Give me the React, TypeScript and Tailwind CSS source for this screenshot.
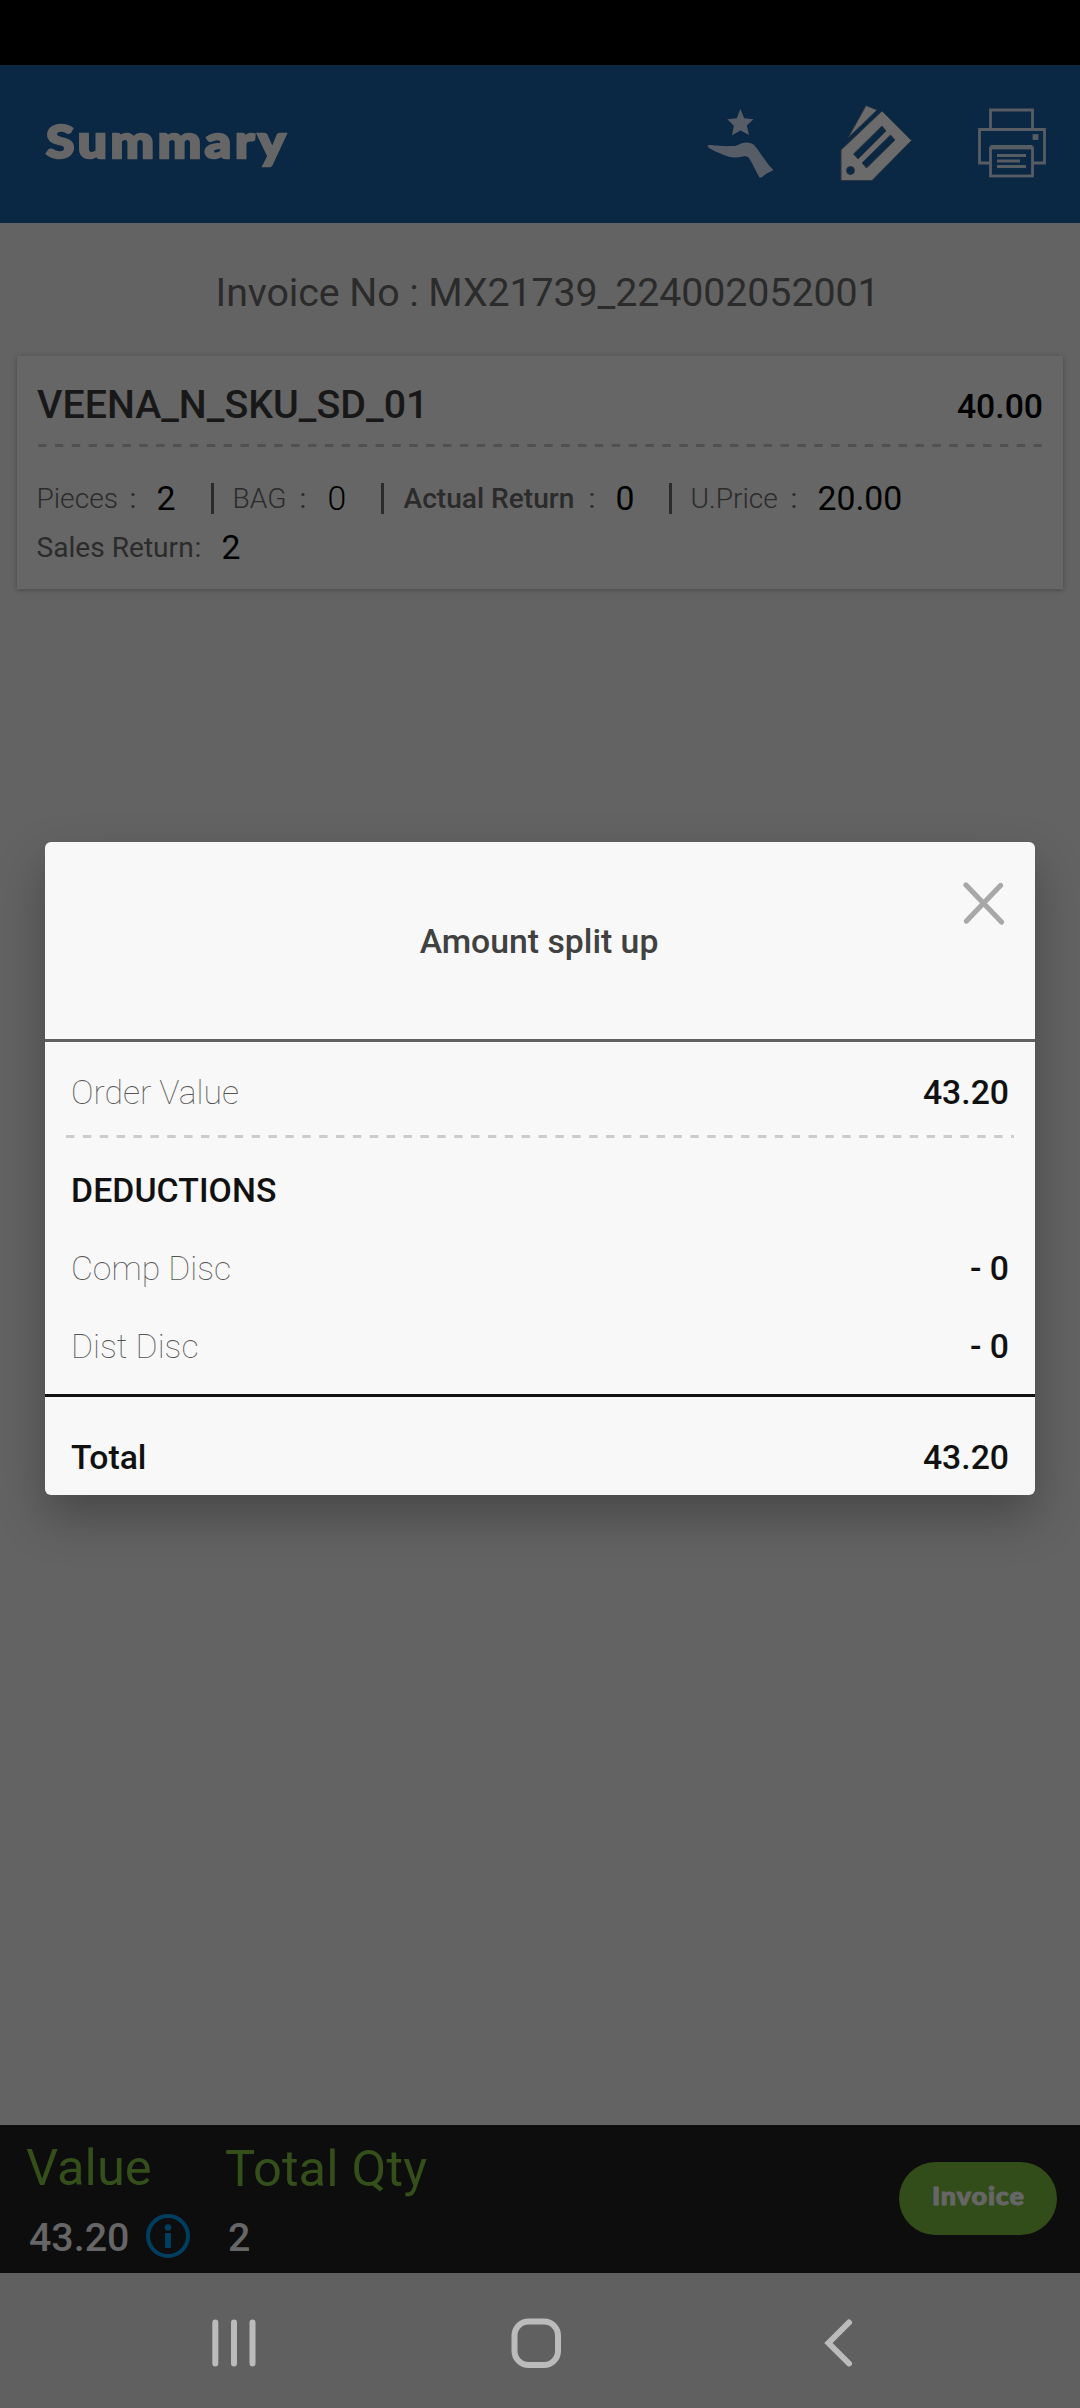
import React from "react";

function HandStarIcon() {
  return (
    <svg className="h-[70px] w-[68px]" viewBox="0 0 68 70" fill="#575d66">
      <path d="M33.300 1 L37.200 10.300 L46.500 11.300 L39.800 17.500 L42 27 L33.500 22.500 L25 27.300 L26.800 17.700 L20.300 11.300 L29.800 10.200 Z" />
      <path d="M0.500 38 C1 36.300 5 37 10 37.500 C17 38.500 22 38 28 38 C32 37 34 35 39 34.500 C44 34 47 36 50 40.500 C55 47.500 60.500 56.500 66 61.500 V62.500 C62 64 58 66.500 54.500 69.500 L52.500 69.500 C48.500 62.500 46 56.500 43.500 52.500 C41.500 48.700 40 48 36 48.500 C31 49.500 26 50 21 48.500 C14 46 6 42.500 2 40 Z" />
    </svg>
  );
}

function TagsIcon() {
  return (
    <svg className="h-[78px] w-[74px]" viewBox="0 0 74 78">
      <g fill="#6b6b6b" stroke="#2b3440" strokeWidth="1" strokeLinejoin="round">
        <path d="M26 1.500 L37 6 L8 34 Z" />
        <path
          fillRule="evenodd"
          d="M42 7 L71.500 36.500 L32 76.500 H1 V46 Z M42 22 L13.500 50 L18 55 L46 27 Z M50.500 31 L22 59 L26.500 64 L55 36 Z M10.500 62.500 A4 4 0 1 0 10.500 70.500 A4 4 0 1 0 10.500 62.500 Z"
        />
      </g>
    </svg>
  );
}

function PrinterIcon() {
  return (
    <svg className="h-[70px] w-[70px]" viewBox="0 0 70 70" fill="none" stroke="#585d63" strokeWidth="2.800">
      <path d="M13.500 21 V2 H55.500 V21" />
      <path d="M13 55 H2.500 V21.500 H67.500 V55 H56" />
      <rect x="13.500" y="40" width="42" height="28" />
      <path d="M13.500 39 H55.500" strokeWidth="4" />
      <path d="M20 47.500 H49 M20 53 H43 M20 58.500 H49" strokeWidth="2.800" />
      <rect x="57" y="27.500" width="3" height="3" fill="#585d63" />
    </svg>
  );
}

function Dashes({ stroke }: { stroke: string }) {
  return (
    <svg className="block h-[3px] w-full">
      <line x1="0" y1="1.500" x2="100%" y2="1.500" stroke={stroke} strokeWidth="3" strokeDasharray="8.440 8.435" />
    </svg>
  );
}

function Bar() {
  return <span className="block h-[31px] w-[3px] -translate-y-[1px] bg-[#2b2b2b]" />;
}

function SplitRow({ label, value }: { label: string; value: string }) {
  return (
    <div className="flex h-[78px] items-center justify-between">
      <span className="font-thin text-[#555555]">{label}</span>
      <span className="font-medium">{value}</span>
    </div>
  );
}

export default function App() {
  return (
    <div className="relative flex h-[2408px] w-[1080px] flex-col overflow-hidden bg-[#636363] font-['Roboto',sans-serif]">
      <div className="h-[65px] shrink-0 bg-black" />
      <header className="flex h-[158px] shrink-0 items-center bg-[#0a2744] pb-[2px] pl-[46px] pr-[33px]">
        <h1 className="mr-auto origin-left scale-x-[1.120] pb-[5px] font-['Lato',sans-serif] text-[46px] font-black leading-none tracking-[3.300px] text-[#666666] [-webkit-text-stroke:2.500px_#666666]">
          Summary
        </h1>
        <div className="mr-[65px]">
          <HandStarIcon />
        </div>
        <div className="mr-[63px]">
          <TagsIcon />
        </div>
        <PrinterIcon />
      </header>

      <div className="flex h-[133px] shrink-0 items-center justify-center pl-[15px] pt-[6px] text-[39.375px] tracking-[-0.100px] text-[#2b2b2b]">
        Invoice No : MX21739_224002052001
      </div>

      <section className="mx-[17px] h-[233px] shrink-0 bg-[#666666] pt-[29px] shadow-[0_1px_5px_rgba(0,0,0,0.280)]">
        <div className="flex h-[40px] items-baseline justify-between pl-[20px] pr-[20px] font-medium">
          <span className="text-[39.375px] leading-[40px] text-[#181818]">VEENA_N_SKU_SD_01</span>
          <span className="text-[33.750px] leading-[40px] text-black">40.00</span>
        </div>
        <div className="mt-[19px] pl-[21px] pr-[21px]">
          <Dashes stroke="#505050" />
        </div>
        <div className="mt-[27px] grid h-[40px] grid-cols-[93px_27px_54px_22px_67px_28px_53px_23px_185px_27px_53px_22px_100px_27px_auto] items-center pl-[19.500px] text-[28.125px] text-[#2b2b2b]">
          <span className="font-light">Pieces</span>
          <span>:</span>
          <span className="text-[33.750px] text-black">2</span>
          <Bar />
          <span className="font-light">BAG</span>
          <span>:</span>
          <span className="text-[33.750px] font-light text-black">0</span>
          <Bar />
          <span className="whitespace-nowrap font-medium">Actual Return</span>
          <span>:</span>
          <span className="text-[33.750px] text-black">0</span>
          <Bar />
          <span className="font-light">U.Price</span>
          <span>:</span>
          <span className="text-[33.750px] text-black">20.00</span>
        </div>
        <div className="mt-[9px] grid h-[40px] grid-cols-[158px_27px_auto] items-center pl-[19.500px] text-[28.125px] text-[#2b2b2b]">
          <span className="whitespace-nowrap">Sales Return</span>
          <span>:</span>
          <span className="text-[33.750px] text-black">2</span>
        </div>
      </section>

      <footer className="mt-auto flex h-[148px] shrink-0 items-start bg-[#0d0d0d] pl-[26px] pr-[23px]">
        <div className="w-[199px]">
          <div className="mt-[18px] h-[50px] text-[50.625px] leading-[50px] text-[#344f1a]">Value</div>
          <div className="mt-[21px] flex h-[48px] items-center pl-[3px]">
            <span className="w-[117px] text-[39.375px] font-medium text-[#666666]">43.20</span>
            <svg className="h-[44px] w-[44px] -translate-y-[2px]" viewBox="0 0 44 44">
              <circle cx="22" cy="22" r="20" fill="none" stroke="#003e60" strokeWidth="4" />
              <circle cx="22" cy="13.500" r="3.300" fill="#003e60" />
              <rect x="19" y="19" width="6" height="15" fill="#003e60" />
            </svg>
          </div>
        </div>
        <div className="mr-auto">
          <div className="mt-[19px] h-[50px] text-[50.625px] leading-[50px] tracking-[0.150px] text-[#344f1a]">Total Qty</div>
          <div className="mt-[20px] flex h-[48px] items-center pl-[3px] text-[39.375px] font-medium text-[#666666]">2</div>
        </div>
        <button className="mt-[37px] flex h-[73px] w-[158px] items-center justify-center rounded-full bg-[#324d19] pb-[5px] font-['Lato',sans-serif] text-[24px] font-black tracking-[0.800px] text-[#666666] [-webkit-text-stroke:1px_#666666]">
          <span className="scale-x-[1.120]">Invoice</span>
        </button>
      </footer>

      <nav className="flex h-[135px] shrink-0 items-start bg-[#606060] pt-[44px]">
        <svg className="ml-[210px] h-[52px] w-[48px]" viewBox="0 0 48 52" stroke="#bbbbbb" strokeWidth="6" strokeLinecap="round">
          <path d="M5.300 5.500 V46.500 M24 5.500 V46.500 M42.500 5.500 V46.500" />
        </svg>
        <svg className="ml-[252px] h-[52px] w-[52px]" viewBox="0 0 52 52">
          <rect x="4.500" y="4.500" width="43.500" height="43.500" rx="14" fill="none" stroke="#bbbbbb" strokeWidth="6" />
        </svg>
        <svg className="ml-[260px] h-[52px] w-[32px]" viewBox="0 0 32 52">
          <path d="M27 5.500 L6.500 26 L27 46.500" fill="none" stroke="#bbbbbb" strokeWidth="6" strokeLinecap="round" strokeLinejoin="miter" />
        </svg>
      </nav>

      <div
        role="dialog"
        className="absolute left-[45px] top-[842px] w-[990px] rounded-[6px] bg-[#f8f8f8] text-[33.750px] text-[#111111] shadow-[0_22px_48px_rgba(0,0,0,0.280)]"
      >
        <div className="relative flex h-[200px] items-center justify-center border-b-[3px] border-[#616161] pt-[4px] font-medium text-[#414141]">
          <span className="-translate-x-[1px]">Amount split up</span>
          <svg className="absolute right-[30px] top-[39px] h-[45px] w-[42px]" viewBox="0 0 42 45">
            <path d="M3 4 L38.500 41 M37.500 4.500 L3.500 40" stroke="#a8a8a8" strokeWidth="5.200" strokeLinecap="round" />
          </svg>
        </div>
        <div className="flex h-[93px] items-center justify-between px-[26px] pt-[10px]">
          <span className="font-thin text-[#555555]">Order Value</span>
          <span className="font-medium">43.20</span>
        </div>
        <div className="px-[21px]">
          <Dashes stroke="#cccccc" />
        </div>
        <div className="flex h-[104px] items-center px-[26px] pt-[2px] font-medium tracking-[0.100px]">DEDUCTIONS</div>
        <div className="-mt-[12px] h-[167px] border-b-[3px] border-[#111111] px-[26px]">
          <SplitRow label="Comp Disc" value="- 0" />
          <SplitRow label="Dist Disc" value="- 0" />
        </div>
        <div className="flex h-[98px] items-center justify-between px-[26px] pt-[24px] font-medium">
          <span>Total</span>
          <span>43.20</span>
        </div>
      </div>
    </div>
  );
}
